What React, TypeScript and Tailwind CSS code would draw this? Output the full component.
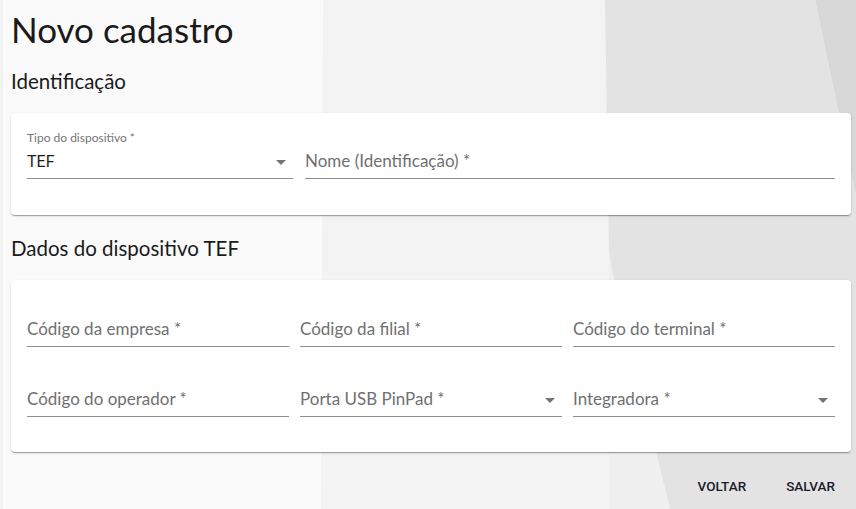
import { ReactNode } from "react";

const font = { fontFamily: "Lato, 'Noto Sans', sans-serif" };

function Arrow() {
  return (
    <svg viewBox="0 0 24 24" className="absolute right-0 top-[4px] size-6 fill-[#757575]">
      <path d="M7 10l5 5 5-5z" />
    </svg>
  );
}

function Field({ label, value, select }: { label: string; value?: string; select?: boolean }) {
  return (
    <div className="flex flex-col">
      <div className="h-4 text-[12px] leading-4 text-[#757575]">{value ? label : ""}</div>
      <div className="relative flex h-[33px] items-center border-b border-[#8e8e8e] pr-6">
        {value ? (
          <span className="text-[16px] text-[#1c1c1c]" style={{ fontFamily: "Roboto, sans-serif" }}>
            {value}
          </span>
        ) : (
          <span className="-mt-[3px] text-[17px] text-[#707070]">{label}</span>
        )}
        {select && <Arrow />}
      </div>
    </div>
  );
}

function Card({ children, className }: { children: ReactNode; className: string }) {
  return (
    <div
      className={`rounded-[4px] bg-white px-4 shadow-[0px_2px_1px_-1px_rgba(0,0,0,0.2),0px_1px_1px_0px_rgba(0,0,0,0.14),0px_1px_3px_0px_rgba(0,0,0,0.12)] ${className}`}
    >
      {children}
    </div>
  );
}

export default function App() {
  return (
    <div className="relative h-[509px] overflow-hidden bg-[#fafafa]" style={font}>
      <svg className="absolute inset-0" width="856" height="509" viewBox="0 0 856 509">
        <rect x="0" y="0" width="3" height="509" fill="#f2f2f2" />
        <polygon points="323,0 606,0 610,250 611,509 321,509" fill="#f3f3f3" />
        <polygon points="609,250 670,509 609,509" fill="#f0f0f0" />
        <polygon points="605,0 815,0 856,196 856,509 670,509 612,270 609,250" fill="#e3e3e3" />
        <polygon points="815,0 856,0 856,196" fill="#d8d8d8" />
      </svg>

      <div className="relative ml-[11px] w-[840px]">
        <h1 className="pt-[9px] text-[35px] leading-[40px] text-[#1a1a1a]">Novo cadastro</h1>
        <h2 className="mt-[18px] text-[20.5px] leading-[28px] text-[#1a1a1a]">Identificação</h2>

        <Card className="mt-[18px] pt-[17px] pb-[36px]">
          <div className="grid grid-cols-[266px_1fr] gap-3">
            <Field label="Tipo do dispositivo *" value="TEF" select />
            <Field label="Nome (Identificação) *" />
          </div>
        </Card>

        <h2 className="mt-[19px] text-[20.5px] leading-[28px] text-[#1a1a1a]">Dados do dispositivo TEF</h2>

        <Card className="mt-[18px] pt-[18px] pb-[35px]">
          <div className="grid grid-cols-3 gap-x-[11px] gap-y-[21px]">
            <Field label="Código da empresa *" />
            <Field label="Código da filial *" />
            <Field label="Código do terminal *" />
            <Field label="Código do operador *" />
            <Field label="Porta USB PinPad *" select />
            <Field label="Integradora *" select />
          </div>
        </Card>

        <div className="mt-[16px] flex justify-end gap-[24px] pr-[8px]" style={{ fontFamily: "Roboto, sans-serif" }}>
          <button className="h-9 px-2 text-[13.5px] font-medium uppercase text-[#1b1b2b]">Voltar</button>
          <button className="h-9 px-2 text-[13.5px] font-medium uppercase text-[#1b1b2b]">Salvar</button>
        </div>
      </div>
    </div>
  );
}
